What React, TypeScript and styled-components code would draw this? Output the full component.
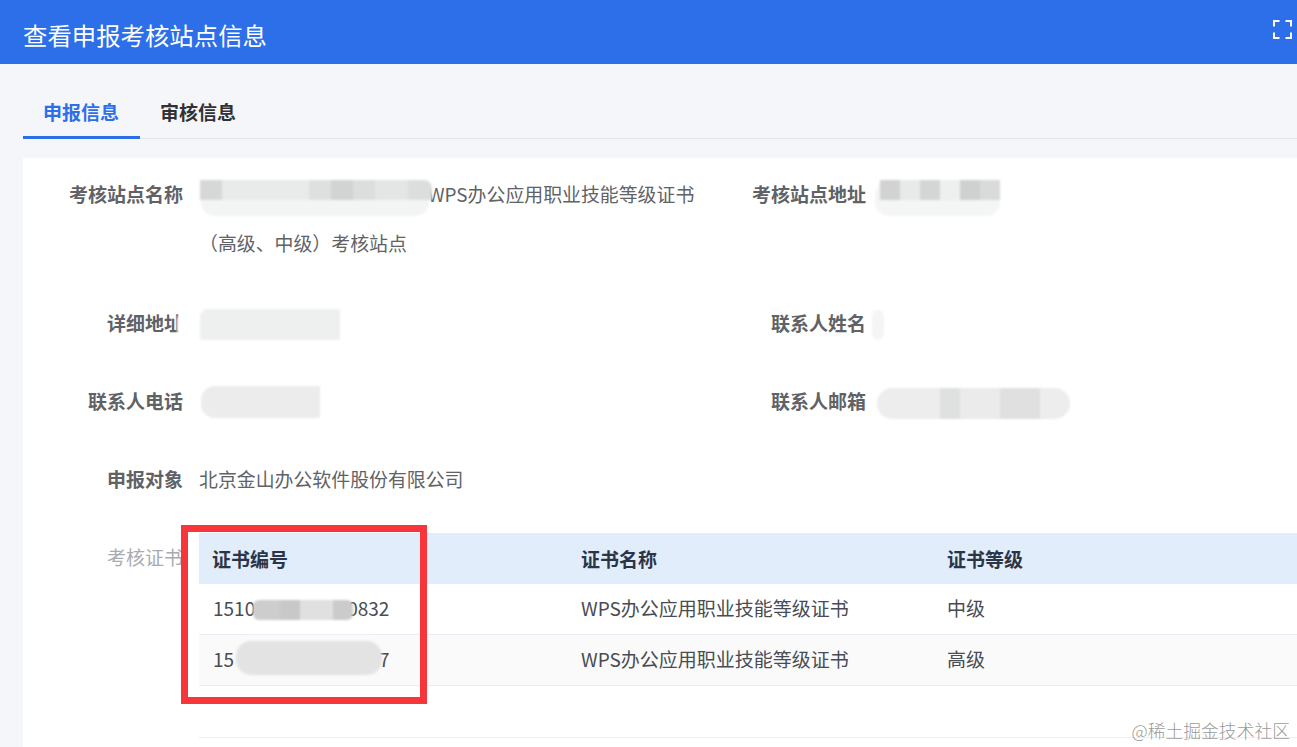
import React from "react";
import styled, { createGlobalStyle } from "styled-components";

const Global = createGlobalStyle`
  html, body { margin: 0; padding: 0; background: #f4f6fa; }
  body { font-family: "Noto Sans CJK SC", "Noto Sans", sans-serif; overflow: hidden; }
`;

const Page = styled.div`
  position: relative;
  width: 1297px;
  height: 747px;
  overflow: hidden;
  background: #f4f6fa;
`;

const Header = styled.header`
  height: 64px;
  background: #2d6ee9;
  display: flex;
  align-items: center;
  justify-content: space-between;
  padding: 0 5px 0 23px;
  box-sizing: border-box;
  color: #fff;
`;

const Title = styled.h1`
  margin: 6px 0 0;
  font-size: 24.4px;
  font-weight: 400;
  line-height: 58px;
`;

const FullscreenIcon = styled.svg`
  width: 19px;
  height: 19px;
  margin-bottom: 5px;
  display: block;
`;

const Body = styled.main`
  padding: 23px 0 0 23px;
`;

const Tabs = styled.nav`
  display: flex;
  height: 52px;
  box-sizing: border-box;
  border-bottom: 1px solid #e0e3e8;
  margin-bottom: 19px;
`;

const Tab = styled.div<{ $active?: boolean }>`
  padding: 0 ${(p) => (p.$active ? "21px" : "20px")} 0 20px;
  height: 52px;
  box-sizing: border-box;
  line-height: 50px;
  font-size: 19px;
  font-weight: 700;
  color: ${(p) => (p.$active ? "#2d6ee9" : "#303133")};
  border-bottom: 3px solid ${(p) => (p.$active ? "#2d6ee9" : "transparent")};
`;

const Panel = styled.section`
  background: #fff;
  height: 589px;
  padding-top: 11px;
  box-sizing: border-box;
`;

const FormGrid = styled.div`
  display: grid;
  grid-template-columns: 683px 591px;
  row-gap: 29px;
`;

const Field = styled.div<{ $span?: boolean; $tail?: number }>`
  display: flex;
  grid-column: ${(p) => (p.$span ? "1 / span 2" : "auto")};
  padding-bottom: ${(p) => p.$tail ?? 0}px;
`;

const Label = styled.div<{ $muted?: boolean }>`
  width: 160px;
  flex: none;
  margin-right: 16px;
  text-align: right;
  font-size: 19px;
  line-height: 49px;
  font-weight: ${(p) => (p.$muted ? 400 : 700)};
  color: ${(p) => (p.$muted ? "#a8abb2" : "#606266")};
`;

const Value = styled.div`
  width: 500px;
  font-size: 18.9px;
  line-height: 49px;
  color: #606266;
`;

const Gap = styled.span<{ $w: number }>`
  display: inline-block;
  width: ${(p) => p.$w}px;
`;

const CertRow = styled.div`
  display: flex;
  margin-top: 30px;
`;

const CertLabel = styled(Label)`
  line-height: 48px;
`;

const TableWrap = styled.div`
  width: 1098px;
  flex: none;
`;

const Table = styled.table`
  width: 1098px;
  table-layout: fixed;
  border-collapse: collapse;
  font-size: 19px;
`;

const Th = styled.th<{ $w: number }>`
  width: ${(p) => p.$w}px;
  height: 51px;
  padding: 0 14px;
  box-sizing: border-box;
  text-align: left;
  font-weight: 700;
  color: #2c3547;
  background: #e1edfb;
  &:first-child {
    padding-left: 13px;
  }
`;

const Tr = styled.tr<{ $striped?: boolean }>`
  background: ${(p) => (p.$striped ? "#fafafa" : "#fff")};
  border-bottom: 1px solid #ebeef5;
`;

const Td = styled.td<{ $h: number }>`
  height: ${(p) => p.$h}px;
  padding: 0 14px 2px;
  box-sizing: border-box;
  color: #484c53;
  white-space: nowrap;
`;

const EmptyRow = styled.div`
  height: 52px;
  box-sizing: border-box;
  border-bottom: 1px solid #ebeef5;
`;

const Redact = styled.div<{ $x: number; $y: number; $w: number; $h: number; $r?: string; $bg: string }>`
  position: absolute;
  left: ${(p) => p.$x}px;
  top: ${(p) => p.$y}px;
  width: ${(p) => p.$w}px;
  height: ${(p) => p.$h}px;
  border-radius: ${(p) => p.$r ?? "0"};
  background: ${(p) => p.$bg};
  filter: blur(1px);
`;

const RedBox = styled.div`
  position: absolute;
  left: 181px;
  top: 525px;
  width: 246px;
  height: 179px;
  box-sizing: border-box;
  border: 7px solid #f6363a;
`;

const Watermark = styled.div`
  position: absolute;
  right: 7px;
  top: 717px;
  font-size: 17.8px;
  line-height: 26px;
  font-weight: 300;
  color: rgba(110, 110, 110, 0.72);
  white-space: nowrap;
`;

const tiles = (stops: [number, string][]) => {
  const total = stops.reduce((s, [w]) => s + w, 0);
  let at = 0;
  const parts = stops.map(([w, c]) => {
    const a = (at / total) * 100;
    at += w;
    return `${c} ${a}% ${(at / total) * 100}%`;
  });
  return `linear-gradient(90deg, ${parts.join(", ")})`;
};

const redactions = [
  { x: 201, y: 199, w: 228, h: 17, r: "0 0 14px 14px", bg: "#f3f4f4" },
  { x: 200, y: 180, w: 232, h: 20, r: "0 8px 0 0", bg: tiles([[20, "#d6d8d8"], [80, "#e9eaea"], [20, "#dedfdf"], [20, "#d2d4d4"], [20, "#dcdddd"], [30, "#e4e5e5"], [22, "#dcdede"]]) },
  { x: 875, y: 182, w: 125, h: 34, r: "14px", bg: "#f4f5f5" },
  { x: 880, y: 180, w: 120, h: 20, bg: tiles([[20, "#d2d2d2"], [20, "#e8eaea"], [20, "#d4d5d5"], [20, "#eeefef"], [20, "#cfd0d0"], [20, "#d9dbdb"]]) },
  { x: 177, y: 310, w: 40, h: 30, r: "10px", bg: "#ffffff" },
  { x: 200, y: 309, w: 140, h: 31, r: "8px 0 0 0", bg: "#eef0f0" },
  { x: 872, y: 310, w: 12, h: 30, r: "10px", bg: "#f5f5f5" },
  { x: 201, y: 386, w: 119, h: 32, r: "14px 0 0 14px", bg: "#ececec" },
  { x: 877, y: 388, w: 193, h: 31, r: "15px", bg: tiles([[63, "#ededed"], [20, "#dfe0e0"], [40, "#ebebeb"], [40, "#e0e0e0"], [30, "#ededed"]]) },
  { x: 253, y: 600, w: 100, h: 20, r: "6px", bg: tiles([[27, "#cdcdcd"], [20, "#c8c8c8"], [33, "#e0e0e0"], [20, "#cbcbcb"]]) },
  { x: 236, y: 641, w: 146, h: 34, r: "15px", bg: "#e3e3e3" },
];

export default function App() {
  return (
    <Page>
      <Global />
      <Header>
        <Title>查看申报考核站点信息</Title>
        <FullscreenIcon viewBox="0 0 19 19" fill="none" stroke="#fff" strokeWidth="2">
          <path d="M1 6.5V1H6.5M12.5 1H18V6.5M18 12.5V18H12.5M6.5 18H1V12.5" />
        </FullscreenIcon>
      </Header>
      <Body>
        <Tabs>
          <Tab $active>申报信息</Tab>
          <Tab>审核信息</Tab>
        </Tabs>
        <Panel>
          <FormGrid>
            <Field $tail={2}>
              <Label>考核站点名称</Label>
              <Value>
                <Gap $w={229} />
                WPS办公应用职业技能等级证书（高级、中级）考核站点
              </Value>
            </Field>
            <Field>
              <Label>考核站点地址</Label>
              <Value />
            </Field>
            <Field>
              <Label>详细地址</Label>
              <Value />
            </Field>
            <Field>
              <Label>联系人姓名</Label>
              <Value />
            </Field>
            <Field>
              <Label>联系人电话</Label>
              <Value />
            </Field>
            <Field>
              <Label>联系人邮箱</Label>
              <Value />
            </Field>
            <Field $span>
              <Label>申报对象</Label>
              <Value>北京金山办公软件股份有限公司</Value>
            </Field>
          </FormGrid>
          <CertRow>
            <CertLabel $muted>考核证书</CertLabel>
            <TableWrap>
              <Table>
                <thead>
                  <tr>
                    <Th $w={368}>证书编号</Th>
                    <Th $w={366}>证书名称</Th>
                    <Th $w={364}>证书等级</Th>
                  </tr>
                </thead>
                <tbody>
                  <Tr>
                    <Td $h={50}>
                      1510
                      <Gap $w={92} />
                      0832
                    </Td>
                    <Td $h={50}>WPS办公应用职业技能等级证书</Td>
                    <Td $h={50}>中级</Td>
                  </Tr>
                  <Tr $striped>
                    <Td $h={51}>
                      15
                      <Gap $w={145} />7
                    </Td>
                    <Td $h={51}>WPS办公应用职业技能等级证书</Td>
                    <Td $h={51}>高级</Td>
                  </Tr>
                </tbody>
              </Table>
              <EmptyRow />
            </TableWrap>
          </CertRow>
        </Panel>
      </Body>
      {redactions.map((r, i) => (
        <Redact key={i} $x={r.x} $y={r.y} $w={r.w} $h={r.h} $r={r.r} $bg={r.bg} />
      ))}
      <RedBox />
      <Watermark>@稀土掘金技术社区</Watermark>
    </Page>
  );
}
